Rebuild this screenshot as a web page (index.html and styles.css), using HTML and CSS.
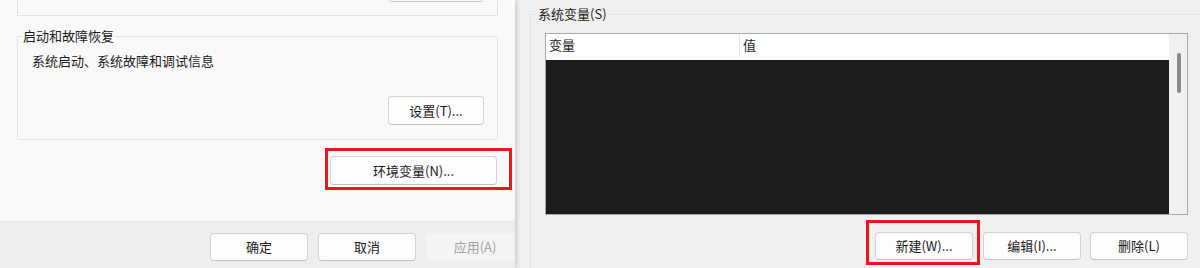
FILE: index.html
```html
<!DOCTYPE html>
<html lang="zh-CN">
  <head>
    <meta charset="utf-8" />
    <title>系统属性 - 环境变量</title>
    <link rel="stylesheet" href="styles.css">
  </head>
  <body>
    <div class="screen">
      <!-- left: system properties dialog -->
      <div class="win win-left">
        <div class="panel">
          <div class="group-top">
            <button class="btn btn-top" type="button"></button>
          </div>
          <fieldset class="group">
            <legend>启动和故障恢复</legend>
            <p class="group-text">系统启动、系统故障和调试信息</p>
            <div class="group-actions">
              <button class="btn btn-set" type="button">设置(T)...</button>
            </div>
          </fieldset>
          <div class="env-row">
            <div class="mark mark-env">
              <button class="btn btn-env" type="button">环境变量(N)...</button>
            </div>
          </div>
        </div>
        <div class="footer">
          <button class="btn" type="button">确定</button>
          <button class="btn" type="button">取消</button>
          <button class="btn btn-disabled" type="button">应用(A)</button>
        </div>
      </div>

      <!-- right: environment variables dialog -->
      <div class="win win-right">
        <fieldset class="group group-sys">
          <legend>系统变量(S)</legend>
          <div class="list">
            <div class="list-main">
              <div class="list-head">
                <div class="col col-name">变量</div>
                <div class="col col-value">值</div>
              </div>
              <div class="list-gap"></div>
              <div class="list-body"></div>
            </div>
            <div class="scroll">
              <div class="thumb"></div>
            </div>
          </div>
          <div class="list-actions">
            <div class="mark mark-new">
              <button class="btn" type="button">新建(W)...</button>
            </div>
            <button class="btn btn-edit" type="button">编辑(I)...</button>
            <button class="btn" type="button">删除(L)</button>
          </div>
        </fieldset>
      </div>
    </div>
  </body>
</html>
```

FILE: styles.css
```css
* {
  box-sizing: border-box;
}

body {
  margin: 0;
  width: 1200px;
  height: 268px;
  overflow: hidden;
  font-family: "Noto Sans CJK SC", "Noto Sans", sans-serif;
  font-size: 13px;
  color: #1b1b1b;
  background: #f0f0f0;
}

.screen {
  display: flex;
  height: 268px;
}

.win {
  height: 268px;
  overflow: hidden;
}

.win-left {
  width: 515px;
  flex-shrink: 0;
  background: #eeeeee;
  box-shadow: 1px 0 5px rgba(0, 0, 0, 0.2);
  position: relative;
  z-index: 1;
}

.win-right {
  flex: 1;
  background: #f0f0f0;
  padding-left: 15px;
}

.panel {
  height: 222px;
  background: #f9f9f9;
  border-bottom: 1px solid #e6e6e6;
  padding: 0 17px;
}

.btn {
  font-family: inherit;
  font-size: 13px;
  color: #1b1b1b;
  background: #fdfdfd;
  border: 1px solid #d3d3d3;
  border-bottom-color: #c2c2c2;
  border-radius: 4px;
  width: 98px;
  height: 28px;
  padding: 0;
  line-height: 26px;
}

/* group box cut off by the top edge */
.group-top {
  height: 16px;
  border: 1px solid #e3e3e3;
  border-top: none;
  display: flex;
  justify-content: flex-end;
  align-items: flex-end;
  padding: 0 13px 13px 0;
}

.btn-top {
  width: 96px;
  height: 29px;
  flex-shrink: 0;
}

.group {
  margin: 12px 0 0;
  padding: 0 13px 14px 0;
  border: 1px solid #e3e3e3;
  min-width: 0;
}

.group legend {
  margin-left: 4px;
  padding: 0 1px;
  line-height: 16px;
}

.group-text {
  margin: 8px 0 0;
  padding-left: 14px;
  line-height: 18px;
}

.group-actions {
  display: flex;
  justify-content: flex-end;
  margin-top: 26px;
}

.btn-set {
  width: 96px;
  height: 29px;
}

.env-row {
  display: flex;
  justify-content: flex-end;
  margin: 8px -14px 0 0;
}

.mark {
  border: 3px solid #e3191b;
}

.mark-env {
  padding: 5px 12px 2px 2px;
}

.btn-env {
  width: 167px;
  height: 29px;
}

.footer {
  display: flex;
  gap: 10px;
  padding: 11px 0 0 210px;
}

.footer .btn {
  flex-shrink: 0;
}

.btn-disabled {
  color: #a3a3a3;
  background: #f4f4f4;
  border-color: #f0f0f0;
}

/* system variables */
.group-sys {
  margin: 6px -30px 0 0;
  padding: 0 0 0 14px;
  border-right: none;
  border-bottom: none;
  height: 300px;
}

.group-sys legend {
  margin-left: -8px;
}

.list {
  margin-top: 11px;
  width: 643px;
  height: 182px;
  border: 1px solid #a9a9a9;
  display: flex;
  background: #fff;
}

.list-main {
  flex: 1;
  display: flex;
  flex-direction: column;
}

.list-head {
  height: 22px;
  display: flex;
  background: #fff;
  line-height: 22px;
}

.col-name {
  width: 193px;
  padding-left: 3px;
}

.col-value {
  flex: 1;
  border-left: 1px solid #e5e5e5;
  padding-left: 3px;
}

.list-gap {
  height: 4px;
  background: #fafafa;
}

.list-body {
  flex: 1;
  background: #1c1c1c;
}

.scroll {
  width: 18px;
  background: #f0f0f0;
  padding: 19px 0 0 8px;
}

.thumb {
  width: 4px;
  height: 40px;
  border-radius: 2px;
  background: #8a8a8a;
}

.list-actions {
  width: 643px;
  display: flex;
  justify-content: flex-end;
  align-items: flex-start;
  margin-top: 5px;
}

.mark-new {
  padding: 9px 4px 2px 6px;
  margin-right: 3px;
}

.list-actions > .btn {
  margin-top: 12px;
}

.btn-edit {
  margin-right: 9px;
}
```
